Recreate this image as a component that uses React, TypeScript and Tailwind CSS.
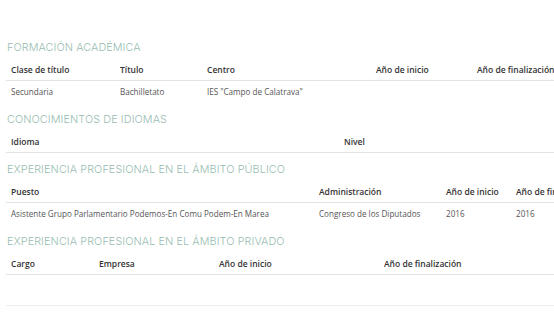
import React from "react";

type Section = {
  title: string;
  cols: string;
  headers: string[];
  rows: string[][];
};

const sections: Section[] = [
  {
    title: "FORMACIÓN ACADÉMICA",
    cols: "grid-cols-[109px_87px_169px_101px_120px]",
    headers: ["Clase de título", "Título", "Centro", "Año de inicio", "Año de finalización"],
    rows: [["Secundaria", "Bachilletato", "IES \"Campo de Calatrava\"", "", ""]],
  },
  {
    title: "CONOCIMIENTOS DE IDIOMAS",
    cols: "grid-cols-[333px_260px]",
    headers: ["Idioma", "Nivel"],
    rows: [],
  },
  {
    title: "EXPERIENCIA PROFESIONAL EN EL ÁMBITO PÚBLICO",
    cols: "grid-cols-[308px_127px_70px_100px]",
    headers: ["Puesto", "Administración", "Año de inicio", "Año de finalización"],
    rows: [["Asistente Grupo Parlamentario Podemos-En Comu Podem-En Marea", "Congreso de los Diputados", "2016", "2016"]],
  },
  {
    title: "EXPERIENCIA PROFESIONAL EN EL ÁMBITO PRIVADO",
    cols: "grid-cols-[88px_120px_165px_220px]",
    headers: ["Cargo", "Empresa", "Año de inicio", "Año de finalización"],
    rows: [],
  },
];

export default function App() {
  return (
    <div className="w-[554px] h-[316px] overflow-hidden bg-white" style={{ fontFamily: "'Open Sans', 'Liberation Sans', sans-serif" }}>
      <div className="w-[620px] pl-[6px] pt-[38px]">
        {sections.map((s, i) => (
          <div key={i} className={i === 0 ? "" : "mt-[7px]"}>
            <div
              className="h-[20px] leading-[20px] pl-[1px] text-[10.8px] font-light text-[#98bcb2] tracking-[0.1px]"
              style={{ fontFamily: "Inter, 'Noto Sans', sans-serif" }}
            >
              {s.title}
            </div>
            <div className={`grid ${s.cols} mt-[2px] h-[21px] items-center border-b border-[#e3e3e3] text-[8.5px] font-semibold text-[#333]`}>
              {s.headers.map((h, j) => (
                <div key={j} className="pl-[5px] whitespace-nowrap">{h}</div>
              ))}
            </div>
            {s.rows.map((r, k) => (
              <div key={k} className={`grid ${s.cols} h-[22px] items-center text-[8.1px] text-[#555]`}>
                {r.map((c, j) => (
                  <div key={j} className="pl-[5px] whitespace-nowrap">{c}</div>
                ))}
              </div>
            ))}
          </div>
        ))}
        <div className="mt-[30px] border-b border-[#ececec] shadow-[0_3px_3px_rgba(0,0,0,0.04)]" />
      </div>
    </div>
  );
}
